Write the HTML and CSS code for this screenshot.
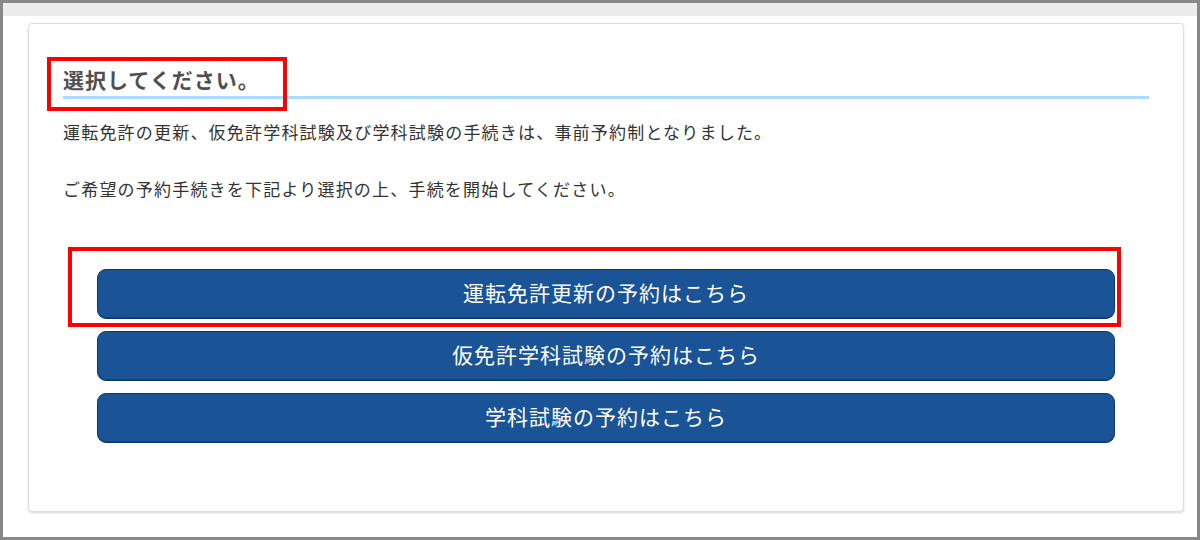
FILE: index.html
```html
<!DOCTYPE html>
<html lang="ja">
<head>
<meta charset="utf-8">
<title>予約選択</title>
<link rel="stylesheet" href="styles.css">
</head>
<body>
<div class="frame">
  <div class="topband"></div>
  <div class="card">
    <div class="heading-wrap">
      <h2 class="heading">選択してください。</h2>
      <span class="mark mark-heading"></span>
    </div>
    <p class="lead">運転免許の更新、仮免許学科試験及び学科試験の手続きは、事前予約制となりました。</p>
    <p class="lead lead-second">ご希望の予約手続きを下記より選択の上、手続を開始してください。</p>
    <div class="buttons">
      <a class="btn" href="#">運転免許更新の予約はこちら</a>
      <a class="btn" href="#">仮免許学科試験の予約はこちら</a>
      <a class="btn" href="#">学科試験の予約はこちら</a>
      <span class="mark mark-button"></span>
    </div>
  </div>
</div>
</body>
</html>
```
FILE: styles.css
```css
html, body {
  margin: 0;
  padding: 0;
  background: #ffffff;
}

.frame {
  box-sizing: border-box;
  width: 1200px;
  height: 540px;
  border: 3px solid #888888;
  background: #ffffff;
  font-family: "Noto Sans CJK JP", "Noto Sans", sans-serif;
  display: flex;
  flex-direction: column;
}

.topband {
  height: 13px;
  background: #ececec;
  flex: none;
}

.card {
  position: relative;
  margin: 7px 13px 0 25px;
  border: 1px solid #dddddd;
  border-radius: 4px;
  box-shadow: 0 1px 2px rgba(0, 0, 0, 0.15);
  background: #ffffff;
  padding: 40px 34px 68px 34px;
}

.heading-wrap {
  position: relative;
}

.heading {
  margin: 0;
  font-size: 21px;
  letter-spacing: 1px;
  font-weight: bold;
  line-height: 31px;
  color: #4f4f4f;
  padding-bottom: 1px;
  border-bottom: 3px solid #a8dcfa;
}

.lead {
  margin: 21px 0 0 0;
  font-size: 17px;
  letter-spacing: 1.2px;
  line-height: 24px;
  color: #333333;
}

.lead-second {
  margin-top: 33px;
}

.buttons {
  position: relative;
  margin: 68px 34px 0 34px;
  display: flex;
  flex-direction: column;
  gap: 12px;
}

.btn {
  box-sizing: border-box;
  display: flex;
  align-items: center;
  justify-content: center;
  height: 50px;
  padding-bottom: 4px;
  background: #1a5496;
  border: 1px solid #0d3a6e;
  border-radius: 9px;
  box-shadow: inset 0 -1px 0 #0f437d;
  color: #ffffff;
  font-size: 21px;
  letter-spacing: 1px;
  text-decoration: none;
}

.mark {
  position: absolute;
  border: 4px solid #ff0000;
  box-sizing: border-box;
  pointer-events: none;
}

.mark-heading {
  left: -16px;
  top: -7px;
  width: 240px;
  height: 54px;
}

.mark-button {
  left: -29px;
  top: -22px;
  width: 1053px;
  height: 80px;
}
```
